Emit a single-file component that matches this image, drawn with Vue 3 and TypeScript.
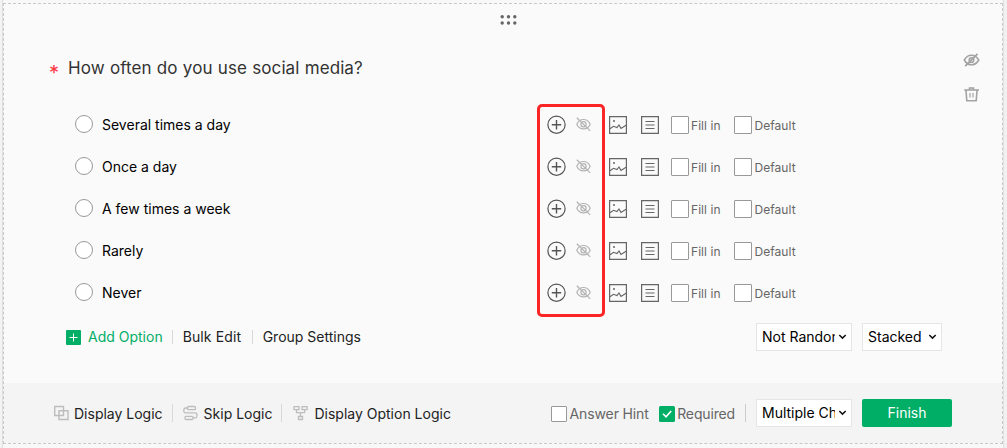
<script setup lang="ts">
interface Choice { id: number; label: string; kind: string }
const choices: Choice[] = [
  { id: 1, label: 'Several times a day', kind: 'several' },
  { id: 2, label: 'Once a day', kind: 'once' },
  { id: 3, label: 'A few times a week', kind: 'few' },
  { id: 4, label: 'Rarely', kind: 'rarely' },
  { id: 5, label: 'Never', kind: 'never' },
]
</script>

<template>
  <div class="page">
    <section class="card">
      <div class="body">
        <svg class="grip" width="18" height="12" viewBox="0 0 18 12" fill="#666">
          <circle v-for="n in 6" :key="n" :cx="3.2 + ((n - 1) % 3) * 6.3" :cy="n > 3 ? 8 : 1.8" r="1.7" />
        </svg>
        <div class="side">
          <svg width="18" height="18" viewBox="0 0 18 18" fill="none" stroke="#a3a3a3" stroke-width="1.6">
            <path d="M1.3 9Q4 4.2 8.5 4.2T15.7 9Q13 13.8 8.5 13.8T1.3 9Z" /><circle cx="8.5" cy="9" r="2.3" /><path d="M2.2 15.2 14.5 2.8" stroke-width="1.8" />
          </svg>
          <svg width="18" height="18" viewBox="0 0 18 18" fill="none" stroke="#a3a3a3" stroke-width="1.6">
            <path d="M1.2 5h14.8M6.5 4.4V3h4v1.4M3 5.5l.8 10.2h9.4L14 5.5" /><path d="M7 8v4.5M10 8v4.5" stroke-width="1.2" />
          </svg>
        </div>
        <h1 class="question"><span class="star">*</span><span class="title">How often do you use social media?</span></h1>
        <div class="choices">
          <div v-for="c in choices" :key="c.id" class="row">
            <span class="radio"></span>
            <span class="label" :class="c.kind">{{ c.label }}</span>
            <svg class="add" width="20" height="20" viewBox="0 0 20 20" fill="none" stroke="#555" stroke-width="1.2">
              <circle cx="9.5" cy="9.7" r="8.6" /><path d="M9.5 5v9.4M4.8 9.7h9.4" stroke-width="1.4" />
            </svg>
            <svg class="hide" width="16" height="16" viewBox="0 0 16 16" fill="none" stroke="#b3b3b3" stroke-width="1.2">
              <path d="M.8 7.2Q3 2.5 7.5 2.5T14.2 7.2Q12 11.9 7.5 11.9T.8 7.2Z" /><circle cx="7.5" cy="7.2" r="2.6" /><path d="M.8.7 14.2 13.9" />
            </svg>
            <svg class="image" width="18" height="18" viewBox="0 0 18 18" fill="none" stroke="#666" stroke-width="1.2">
              <path d="M.6.6h16.8v16.8H.6z" /><path d="M1 12.8 4.5 10.3 8 11.6l2-2.6 2 3.5L17 9.3" /><circle cx="5" cy="5" r="1" fill="#666" stroke="none" />
            </svg>
            <svg class="note" width="18" height="18" viewBox="0 0 18 18" fill="none" stroke="#666" stroke-width="1.2">
              <path d="M.6.6h16.8v16.8H.6z" /><path d="M4.5 5.5h9M4.5 9h9M4.5 12.5h9" />
            </svg>
            <span class="box"></span><span class="small fill">Fill in</span>
            <span class="box"></span><span class="small default">Default</span>
          </div>
          <div class="highlight"></div>
        </div>
        <div class="tools">
          <svg class="plus" width="15" height="15" viewBox="0 0 15 15"><rect width="15" height="15" rx="1" fill="#00ae66" /><path d="M7.5 3.5v8M3.5 7.5h8" stroke="#fff" stroke-width="1" /></svg>
          <span class="addopt">Add Option</span><i class="bar"></i>
          <span class="bulk">Bulk Edit</span><i class="bar"></i>
          <span class="group">Group Settings</span>
          <div class="select wide"><span class="random">Not Random</span><svg width="9" height="6" viewBox="0 0 9 6"><path d="M1.3 1 4.5 4.1 7.7 1" fill="none" stroke="#111" stroke-width="1.5" /></svg></div>
          <div class="select narrow"><span class="stacked">Stacked</span><svg width="9" height="6" viewBox="0 0 9 6"><path d="M1.3 1 4.5 4.1 7.7 1" fill="none" stroke="#111" stroke-width="1.5" /></svg></div>
        </div>
      </div>
      <footer class="footer">
        <svg width="16" height="16" viewBox="0 0 16 16" fill="none" stroke="#bdbdbd" stroke-width="1.4"><path d="M1.7 1.5h8.8v9H1.7zM6 5.7h9v8.8H6z" /></svg>
        <span class="display">Display Logic</span><i class="bar"></i>
        <svg width="16" height="16" viewBox="0 0 16 16" fill="none" stroke="#bdbdbd" stroke-width="1.3"><rect x="4.5" y="1.5" width="8" height="3.2" rx="1" /><rect x="2" y="11.3" width="8" height="3.2" rx="1" /><path d="M4.5 3H2.5Q.8 3 .8 5.5t1.7 2.4h10Q14 7.9 14 10.3t-1.5 2.6H10" /></svg>
        <span class="skip">Skip Logic</span><i class="bar"></i>
        <svg width="16" height="16" viewBox="0 0 16 16" fill="none" stroke="#bdbdbd" stroke-width="1.3"><path d="M2 1.7h5v3H2zM10.1 1.7h5v3h-5zM6.5 11.5h4v3h-4zM4.5 4.7v3h8.1v-3M8.5 7.7v3.8" /></svg>
        <span class="option">Display Option Logic</span>
        <div class="right">
          <span class="box sm"></span><span class="hint">Answer Hint</span>
          <svg class="checked" width="16" height="16" viewBox="0 0 16 16"><rect width="16" height="16" rx="1.5" fill="#00ae66" /><path d="m4 7.8 3 3L12.2 5" fill="none" stroke="#fff" stroke-width="1.6" /></svg>
          <span class="required">Required</span><i class="bar dark"></i>
          <div class="select wide"><span class="multiple">Multiple Choice</span><svg width="9" height="6" viewBox="0 0 9 6"><path d="M1.3 1 4.5 4.1 7.7 1" fill="none" stroke="#111" stroke-width="1.5" /></svg></div>
          <button class="finish"><span class="done">Finish</span></button>
        </div>
      </footer>
    </section>
  </div>
</template>

<style>
body { margin: 0; background: #fafafa; }
</style>
<style scoped>
* { box-sizing: border-box; }
.page { width: 1007px; height: 448px; padding: 3px 4px 4px 3px; overflow: hidden; background: linear-gradient(90deg, #f3f3f3 2px, #dedede 2px 3px, #f8f8f8 3px 1003px, #e2e2e2 1003px 1004px, #f1f1f1 1004px); font-family: Inter, "Liberation Sans", sans-serif; font-size: 14px; line-height: 20px; color: #222; }
.page span { white-space: nowrap; }
.card { width: 1000px; height: 441px; border: 1px dashed #c8c8c8; background: #fafafa; }
.body { position: relative; height: 379px; }
.grip { position: absolute; left: 495px; top: 11px; }
.side { position: absolute; left: 959px; top: 47px; display: grid; gap: 16px; }
.question { display: flex; margin: 0; padding: 52px 0 0 45px; font-weight: 400; }
.star { width: 19px; font-size: 20px; line-height: 34px; color: #ff3342; }
.title { font-size: 17px; line-height: 24px; color: #333; letter-spacing: .08px; word-spacing: .4px; }
.choices { position: relative; padding-top: 14px; }
.row { height: 42px; display: flex; align-items: center; padding-left: 71px; color: #000; }
.row svg, .box { flex: none; }
.radio { width: 18px; height: 18px; flex: none; border: 1px solid #999; border-radius: 50%; background: #fff; position: relative; top: -1px; }
.label { width: 451px; flex: none; padding-left: 9px; }
.add { margin-left: 3px; }
.hide { margin-left: 9px; margin-right: 1px; }
.image { margin-left: 16px; }
.note { margin-left: 14px; }
.box { width: 18px; height: 18px; border: 1px solid #999; border-radius: 1px; background: #fff; margin-left: 12px; }
.small { font-size: 12px; color: #666; margin-left: 2px; padding-top: 1px; letter-spacing: .05px; }
.fill { width: 31px; }
.default { margin-left: 2.5px; }
.highlight { position: absolute; left: 533px; top: 14px; width: 68px; height: 213px; border: 3px solid #fc2525; border-radius: 5px; }
.tools { display: flex; align-items: center; width: 938px; height: 28px; margin-top: 9px; padding-left: 62px; }
.addopt { color: #00ae66; margin-left: 7px; }
.bar { width: 1px; height: 14px; background: #d8d8d8; margin: 0 10px; flex: none; }
.tools .bar { margin-left: 9px; }
.bulk { letter-spacing: .12px; }
.tools .bulk + .bar { margin-left: 10.5px; }
.select { display: flex; align-items: center; flex: none; height: 28px; background: #fff; border: 1px solid #e5e5e5; padding-left: 5px; color: #000; }
.select > span { flex: none; overflow: hidden; width: 73px; margin-right: 3px; }
.wide { width: 96px; }
.narrow { width: 80px; margin-left: 10px; }
.select.narrow > span { width: 58px; margin-right: 2px; }
.tools .wide { margin-left: auto; }
.footer { height: 60px; background: #f4f4f4; display: flex; align-items: center; padding-left: 49px; width: 998px; }
.footer > span { margin-left: 5px; padding-top: 2px; }
.footer > .bar { margin-left: 9px; }
.footer .bar { height: 18px; }
.footer > .display { margin-left: 5px; }
.footer > .option { margin-left: 6px; }
.footer .box.sm { width: 16px; height: 16px; margin: 0; }
.right { margin-left: auto; margin-right: 50px; display: flex; align-items: center; color: #666; }
.right > svg { margin-left: 10px; }
.checked, .box.sm { position: relative; top: 1px; }
.hint, .required { margin-left: 3px; padding-top: 2px; letter-spacing: -.13px; }
.required { margin-left: 2.5px; letter-spacing: -.15px; }
.footer .dark { background: #ccc; }
.finish { width: 90px; height: 28px; border: 0; border-radius: 2px; padding: 0; margin-left: 10px; background: #00ae66; color: #fff; font: inherit; }
</style>
